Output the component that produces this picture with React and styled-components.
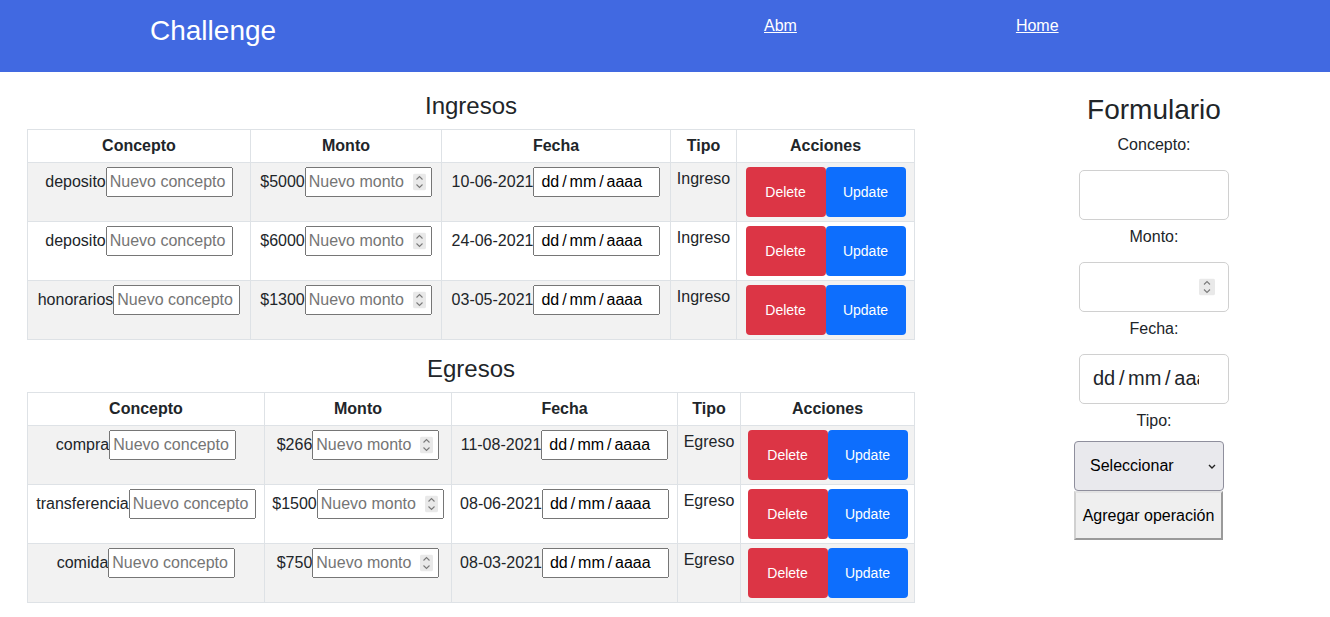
import React from 'react';
import styled, { createGlobalStyle } from 'styled-components';

const ingresos = [
  { concepto: 'deposito', monto: 5000, fecha: '10-06-2021' },
  { concepto: 'deposito', monto: 6000, fecha: '24-06-2021' },
  { concepto: 'honorarios', monto: 1300, fecha: '03-05-2021' },
];

const egresos = [
  { concepto: 'compra', monto: 266, fecha: '11-08-2021' },
  { concepto: 'transferencia', monto: 1500, fecha: '08-06-2021' },
  { concepto: 'comida', monto: 750, fecha: '08-03-2021' },
];

const columns = ['Concepto', 'Monto', 'Fecha', 'Tipo', 'Acciones'];

// little up/down box drawn over number inputs
const SpinIcon = ({ w, h }) => (
  <svg width={w} height={h} viewBox={`0 0 ${w} ${h}`}>
    <rect x="0" y="0" width={w} height={h} rx="2" fill="#e9e9e9" />
    <path
      d={`M${w / 2 - 3} ${h / 2 - 2.5} L${w / 2} ${h / 2 - 5.5} L${w / 2 + 3} ${h / 2 - 2.5}`}
      fill="none"
      stroke="#7a7a7a"
      strokeWidth="1.1"
    />
    <path
      d={`M${w / 2 - 3} ${h / 2 + 2.5} L${w / 2} ${h / 2 + 5.5} L${w / 2 + 3} ${h / 2 + 2.5}`}
      fill="none"
      stroke="#7a7a7a"
      strokeWidth="1.1"
    />
  </svg>
);

const OperationsTable = ({ rows, tipo, widths }) => (
  <Table>
    <thead>
      <tr>
        {columns.map((col, i) => (
          <Th key={col} $w={widths[i]}>{col}</Th>
        ))}
      </tr>
    </thead>
    <tbody>
      {rows.map((row, i) => (
        <Row key={i}>
          <Td>
            {row.concepto}
            <CellInput type="text" placeholder="Nuevo concepto" />
          </Td>
          <Td>
            ${row.monto}
            <NumberWrap>
              <CellInput type="number" placeholder="Nuevo monto" />
              <Spinner $right={6}>
                <SpinIcon w={13} h={17} />
              </Spinner>
            </NumberWrap>
          </Td>
          <Td>
            {row.fecha}
            <DateInput type="text" readOnly value="dd / mm / aaaa" />
          </Td>
          <Td>{tipo}</Td>
          <Td>
            <ActionButton $variant="danger">Delete</ActionButton>
            <ActionButton $variant="primary">Update</ActionButton>
          </Td>
        </Row>
      ))}
    </tbody>
  </Table>
);

const App = () => (
  <>
    <GlobalStyle />
    <Header>
      <Brand>Challenge</Brand>
      <Nav>
        <NavLink href="#">Abm</NavLink>
        <NavLink href="#">Home</NavLink>
      </Nav>
    </Header>
    <Main>
      <TablesColumn>
        <SectionTitle>Ingresos</SectionTitle>
        <OperationsTable rows={ingresos} tipo="Ingreso" widths={[223, 191, 229, 66, 178]} />
        <SectionTitle>Egresos</SectionTitle>
        <OperationsTable rows={egresos} tipo="Egreso" widths={[237, 187, 226, 63, 174]} />
      </TablesColumn>
      <FormColumn>
        <FormTitle>Formulario</FormTitle>
        <FieldLabel>Concepto:</FieldLabel>
        <FormInput type="text" />
        <FieldLabel>Monto:</FieldLabel>
        <FormNumberWrap>
          <FormInput type="number" />
          <Spinner $right={14}>
            <SpinIcon w={16} h={17} />
          </Spinner>
        </FormNumberWrap>
        <FieldLabel>Fecha:</FieldLabel>
        <FormDate type="text" readOnly value="dd / mm / aaaa" />
        <FieldLabel $gap={8}>Tipo:</FieldLabel>
        <SelectWrap>
          <TypeSelect defaultValue="">
            <option value="">Seleccionar</option>
            <option value="ingreso">Ingreso</option>
            <option value="egreso">Egreso</option>
          </TypeSelect>
          <SelectChevron width="8" height="5" viewBox="0 0 8 5">
            <path d="M1 1 L4 4 L7 1" fill="none" stroke="#222" strokeWidth="1.4" />
          </SelectChevron>
        </SelectWrap>
        <SubmitButton>Agregar operación</SubmitButton>
      </FormColumn>
    </Main>
  </>
);

export default App;

const GlobalStyle = createGlobalStyle`
  *, *::before, *::after {
    box-sizing: border-box;
  }
  body {
    margin: 0;
    font-family: "Liberation Sans", Arial, sans-serif;
    font-size: 16px;
    line-height: 1.5;
    color: #212529;
    background: #fff;
  }
  input[type="number"]::-webkit-inner-spin-button,
  input[type="number"]::-webkit-outer-spin-button {
    -webkit-appearance: none;
    margin: 0;
  }
`;

const Header = styled.header`
  display: flex;
  align-items: flex-start;
  height: 72px;
  background: #4169e1;
  padding: 14px 0 0 150px;
`;

const Brand = styled.div`
  flex: 0 0 614px;
  font-size: 28px;
  line-height: 1.2;
  color: #fff;
`;

const Nav = styled.nav`
  display: flex;
  gap: 219px;
`;

const NavLink = styled.a`
  color: #fff;
  text-decoration: underline;
  font-size: 16px;
  line-height: 24px;
`;

const Main = styled.main`
  display: flex;
  align-items: flex-start;
  padding: 20px 0 0 27px;
`;

const TablesColumn = styled.div`
  width: 888px;
`;

const SectionTitle = styled.h4`
  margin: 0 0 8px;
  font-size: 24px;
  font-weight: 500;
  line-height: 1.2;
  text-align: center;
`;

const Table = styled.table`
  width: 887px;
  table-layout: fixed;
  border-collapse: collapse;
  margin-bottom: 15px;
  vertical-align: top;
`;

const Th = styled.th`
  width: ${({ $w }) => $w}px;
  border: 1px solid #dee2e6;
  padding: 4px;
  text-align: center;
  font-weight: bold;
  line-height: 24px;
`;

const Row = styled.tr`
  &:nth-child(odd) {
    background: #f2f2f2;
  }
`;

const Td = styled.td`
  border: 1px solid #dee2e6;
  padding: 4px;
  text-align: center;
  vertical-align: top;
  white-space: nowrap;
`;

const CellInput = styled.input`
  width: 127px;
  margin: 0;
  font: inherit;

  &::placeholder {
    color: #757575;
  }
`;

const DateInput = styled(CellInput)`
  padding-left: 6px;
  color: #000;
  word-spacing: -1.5px;
`;

const NumberWrap = styled.span`
  position: relative;
  display: inline-block;
`;

const Spinner = styled.span`
  position: absolute;
  right: ${({ $right }) => $right}px;
  top: 50%;
  transform: translateY(-50%);
  display: flex;
  pointer-events: none;
`;

const ActionButton = styled.button`
  display: inline-block;
  vertical-align: top;
  width: 80px;
  height: 50px;
  border: none;
  border-radius: 4px;
  color: #fff;
  font-family: inherit;
  font-size: 14px;
  background: ${({ $variant }) => ($variant === 'danger' ? '#dc3545' : '#0d6efd')};
`;

const FormColumn = styled.div`
  width: 300px;
  margin-left: 89px;
  padding-top: 1px;
  display: flex;
  flex-direction: column;
  align-items: center;
`;

const FormTitle = styled.h3`
  margin: 0 0 6px;
  font-size: 28px;
  font-weight: 500;
  line-height: 1.2;
`;

const FieldLabel = styled.label`
  display: block;
  line-height: 24px;
  margin-bottom: ${({ $gap }) => $gap || 13}px;
`;

const FormInput = styled.input`
  display: block;
  width: 150px;
  height: 50px;
  margin: 0 0 5px;
  padding: 0 13px;
  border: 1px solid #d0d0d0;
  border-radius: 5px;
  font-family: inherit;
  font-size: 20px;
  background-color: #fff;
`;

const FormNumberWrap = styled.div`
  position: relative;
  margin-bottom: 5px;

  ${FormInput} {
    margin: 0;
  }
`;

const FormDate = styled(FormInput)`
  padding-right: 29px;
  color: #212529;
  word-spacing: -1.9px;
`;

const SelectWrap = styled.div`
  position: relative;
  margin-right: 10px;
`;

const TypeSelect = styled.select`
  display: block;
  width: 150px;
  height: 50px;
  margin: 0;
  padding: 0 0 0 15px;
  border: 1px solid #8f8f9d;
  border-radius: 4px;
  background-color: #e9e9ed;
  color: #000;
  font-family: inherit;
  font-size: 16px;
  appearance: none;
  -webkit-appearance: none;
`;

const SelectChevron = styled.svg`
  position: absolute;
  right: 8px;
  top: 23px;
  pointer-events: none;
`;

const SubmitButton = styled.button`
  width: 149px;
  height: 49px;
  margin: 0 11px 0 0;
  padding: 2px 6px 0;
  border-width: 2px;
  border-style: solid;
  border-color: #e3e3e3 #9a9a9a #9a9a9a #d0d0d0;
  background: #efefef;
  color: #000;
  font-family: inherit;
  font-size: 16px;
`;
